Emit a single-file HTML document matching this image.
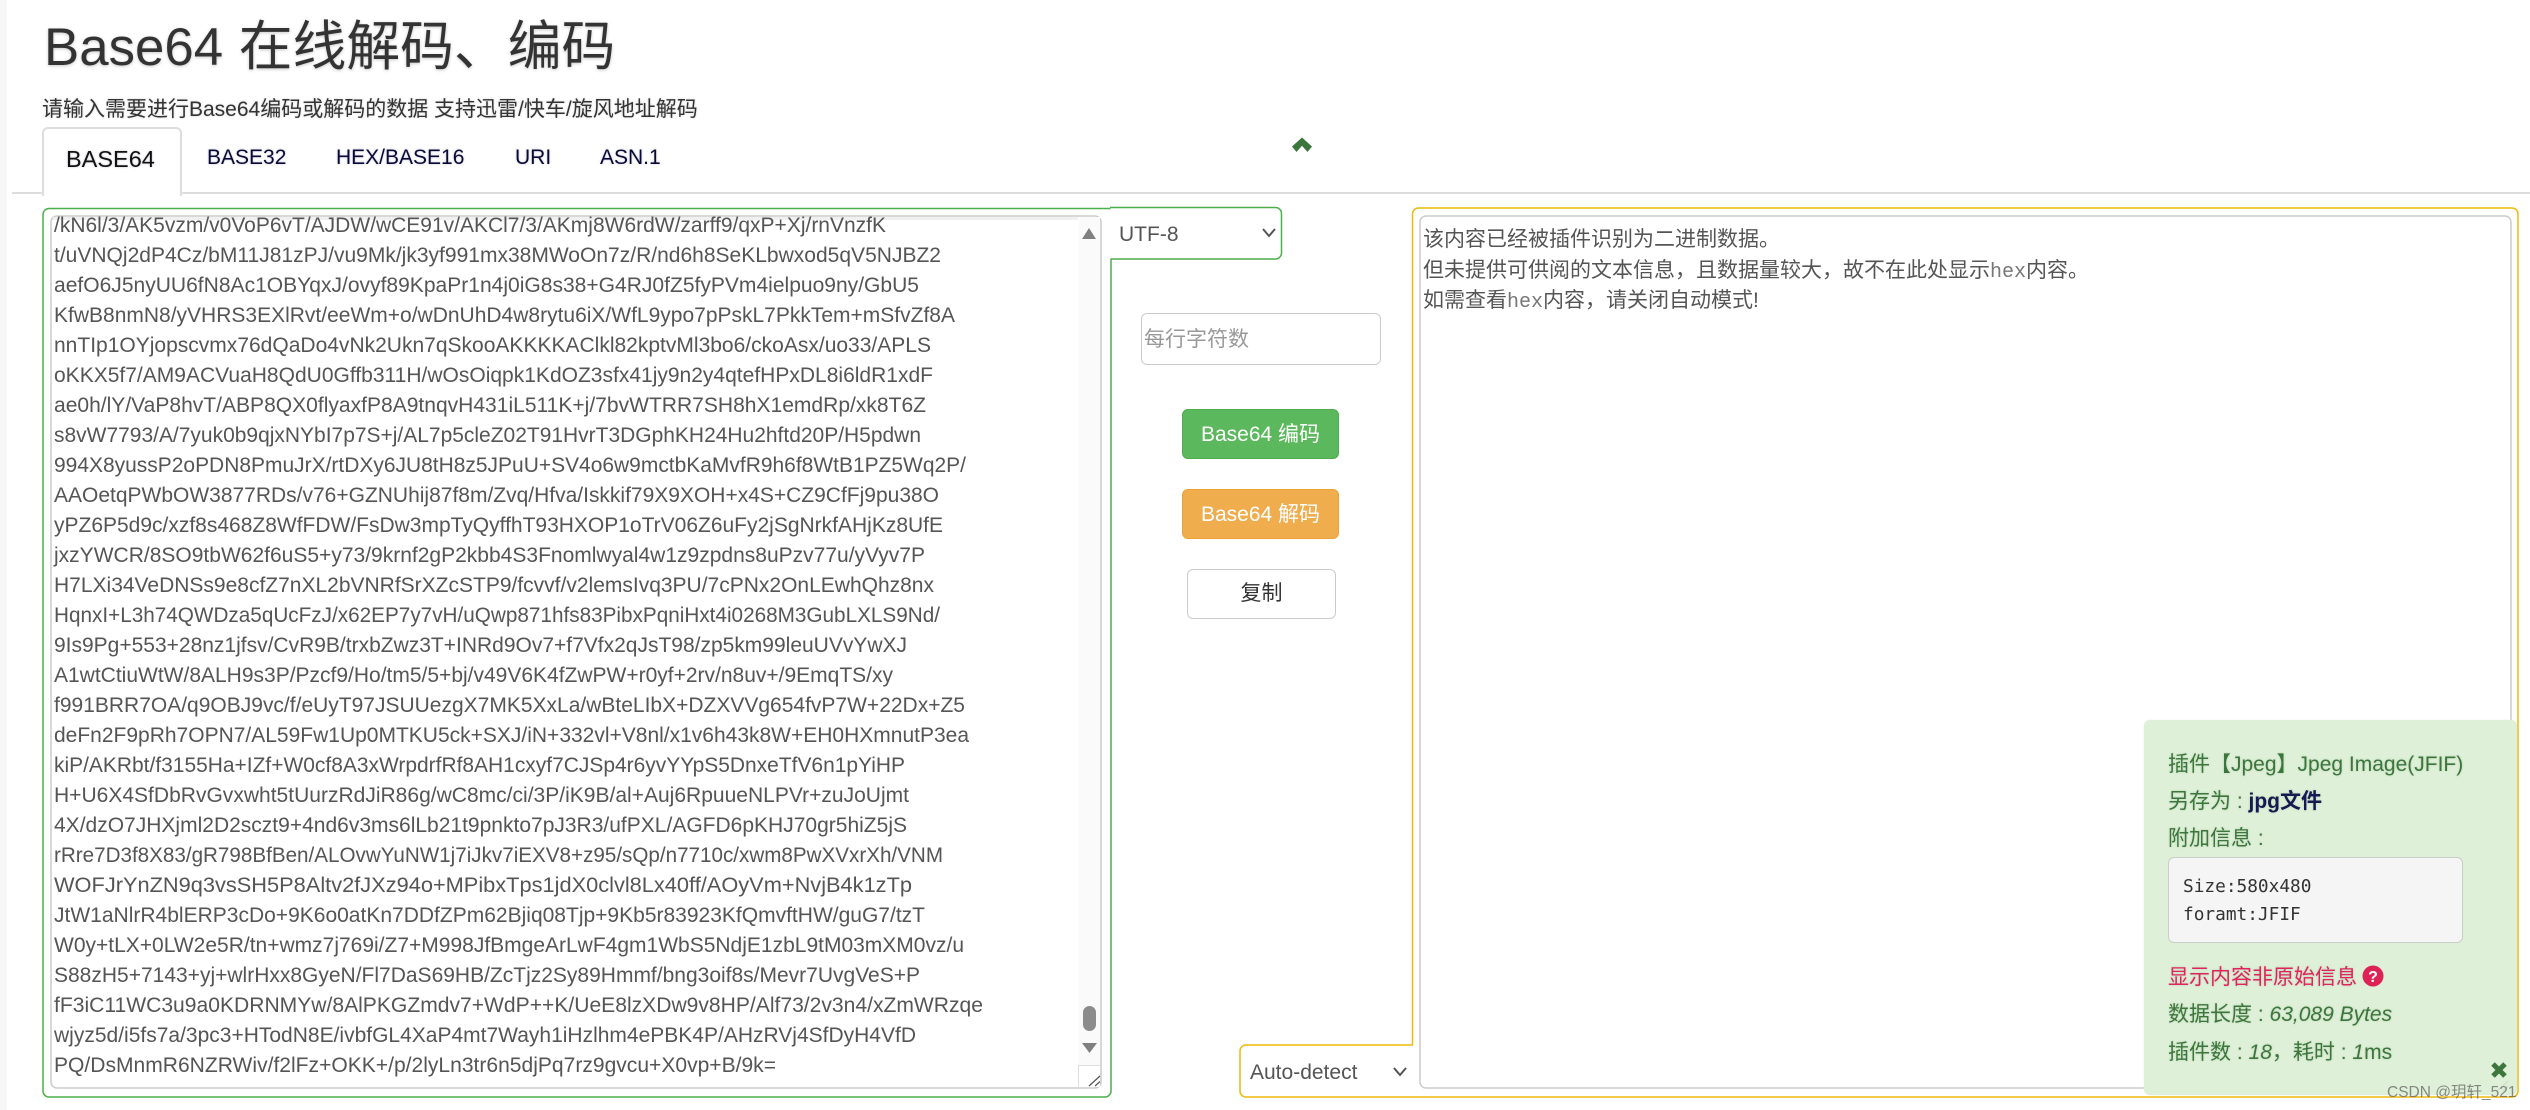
<!DOCTYPE html>
<html lang="zh"><head><meta charset="utf-8"><title>Base64 在线解码、编码</title>
<style>
html,body{margin:0;padding:0;background:#fff}
body{position:relative;width:2530px;height:1110px;overflow:hidden;font-family:"Liberation Sans","Noto Sans CJK SC",sans-serif;color:#333}
.a{position:absolute}
.t{position:absolute;white-space:pre;line-height:30px}
.tab{position:absolute;white-space:pre;line-height:30px;font-size:21px;color:#0a0a38;text-shadow:0 0 2px rgba(0,0,60,.25)}
.btn{position:absolute;border-radius:6px;text-align:center;font-size:21px;box-sizing:border-box}
.p{position:absolute;left:2168px;white-space:pre;line-height:30px;font-size:21px;color:#3c763d;text-shadow:0 0 2px rgba(60,118,61,.25)}
svg{position:absolute;left:0;top:0}
</style></head><body>
<div class="a" style="left:0;top:0;width:7px;height:1110px;background:#f7f7f7"></div>

<div class="t" style="left:44px;top:15px;font-size:52.8px;line-height:64px;color:#333;word-spacing:1px;text-shadow:0 1px 3px rgba(0,0,0,.22)">Base64 <span style="font-size:53.8px">在线解码、编码</span></div>
<div class="t" style="left:42px;top:95px;font-size:21px;color:#333;text-shadow:0 0 2px rgba(0,0,0,.2)">请输入需要进行Base64编码或解码的数据 支持迅雷/快车/旋风地址解码</div>

<div class="a" style="left:12px;top:192px;width:2518px;height:2px;background:#ddd"></div>
<div class="a" style="left:42px;top:127px;width:136px;height:67px;background:#fff;border:2px solid #ddd;border-bottom:0;border-radius:6px 6px 0 0"></div>
<div class="tab" style="left:66px;top:144px;font-size:23.5px;color:#111">BASE64</div>
<div class="tab" style="left:207px;top:143px">BASE32</div>
<div class="tab" style="left:336px;top:143px">HEX/BASE16</div>
<div class="tab" style="left:515px;top:143px">URI</div>
<div class="tab" style="left:600px;top:143px">ASN.1</div>

<svg width="2530" height="1110" viewBox="0 0 2530 1110">
  <polygon points="1302,137.5 1312,146.5 1307.5,152 1302,145.8 1296.5,152 1292,146.5" fill="#3c763d"/>
  <!-- left textarea -->
  <rect x="51" y="216" width="1050" height="872" rx="6" fill="#fff" stroke="#ccc" stroke-width="1.5"/>
  <rect x="53" y="217" width="1025" height="3" fill="#f0f0f0"/>
  <rect x="1079" y="217" width="21" height="848" fill="#fafafa"/>
  <g fill="#555" font-family="'Liberation Sans',sans-serif" font-size="21.5">
<text x="54" y="232" textLength="832" lengthAdjust="spacingAndGlyphs">/kN6l/3/AK5vzm/v0VoP6vT/AJDW/wCE91v/AKCl7/3/AKmj8W6rdW/zarff9/qxP+Xj/rnVnzfK</text>
<text x="54" y="262" textLength="887" lengthAdjust="spacingAndGlyphs">t/uVNQj2dP4Cz/bM11J81zPJ/vu9Mk/jk3yf991mx38MWoOn7z/R/nd6h8SeKLbwxod5qV5NJBZ2</text>
<text x="54" y="292" textLength="865" lengthAdjust="spacingAndGlyphs">aefO6J5nyUU6fN8Ac1OBYqxJ/ovyf89KpaPr1n4j0iG8s38+G4RJ0fZ5fyPVm4ielpuo9ny/GbU5</text>
<text x="54" y="322" textLength="901" lengthAdjust="spacingAndGlyphs">KfwB8nmN8/yVHRS3EXlRvt/eeWm+o/wDnUhD4w8rytu6iX/WfL9ypo7pPskL7PkkTem+mSfvZf8A</text>
<text x="54" y="352" textLength="877" lengthAdjust="spacingAndGlyphs">nnTIp1OYjopscvmx76dQaDo4vNk2Ukn7qSkooAKKKKAClkl82kptvMl3bo6/ckoAsx/uo33/APLS</text>
<text x="54" y="382" textLength="879" lengthAdjust="spacingAndGlyphs">oKKX5f7/AM9ACVuaH8QdU0Gffb311H/wOsOiqpk1KdOZ3sfx41jy9n2y4qtefHPxDL8i6ldR1xdF</text>
<text x="54" y="412" textLength="872" lengthAdjust="spacingAndGlyphs">ae0h/lY/VaP8hvT/ABP8QX0flyaxfP8A9tnqvH431iL511K+j/7bvWTRR7SH8hX1emdRp/xk8T6Z</text>
<text x="54" y="442" textLength="867" lengthAdjust="spacingAndGlyphs">s8vW7793/A/7yuk0b9qjxNYbI7p7S+j/AL7p5cleZ02T91HvrT3DGphKH24Hu2hftd20P/H5pdwn</text>
<text x="54" y="472" textLength="912" lengthAdjust="spacingAndGlyphs">994X8yussP2oPDN8PmuJrX/rtDXy6JU8tH8z5JPuU+SV4o6w9mctbKaMvfR9h6f8WtB1PZ5Wq2P/</text>
<text x="54" y="502" textLength="885" lengthAdjust="spacingAndGlyphs">AAOetqPWbOW3877RDs/v76+GZNUhij87f8m/Zvq/Hfva/Iskkif79X9XOH+x4S+CZ9CfFj9pu38O</text>
<text x="54" y="532" textLength="889" lengthAdjust="spacingAndGlyphs">yPZ6P5d9c/xzf8s468Z8WfFDW/FsDw3mpTyQyffhT93HXOP1oTrV06Z6uFy2jSgNrkfAHjKz8UfE</text>
<text x="54" y="562" textLength="871" lengthAdjust="spacingAndGlyphs">jxzYWCR/8SO9tbW62f6uS5+y73/9krnf2gP2kbb4S3Fnomlwyal4w1z9zpdns8uPzv77u/yVyv7P</text>
<text x="54" y="592" textLength="880" lengthAdjust="spacingAndGlyphs">H7LXi34VeDNSs9e8cfZ7nXL2bVNRfSrXZcSTP9/fcvvf/v2lemsIvq3PU/7cPNx2OnLEwhQhz8nx</text>
<text x="54" y="622" textLength="886" lengthAdjust="spacingAndGlyphs">HqnxI+L3h74QWDza5qUcFzJ/x62EP7y7vH/uQwp871hfs83PibxPqniHxt4i0268M3GubLXLS9Nd/</text>
<text x="54" y="652" textLength="853" lengthAdjust="spacingAndGlyphs">9Is9Pg+553+28nz1jfsv/CvR9B/trxbZwz3T+INRd9Ov7+f7Vfx2qJsT98/zp5km99leuUVvYwXJ</text>
<text x="54" y="682" textLength="839" lengthAdjust="spacingAndGlyphs">A1wtCtiuWtW/8ALH9s3P/Pzcf9/Ho/tm5/5+bj/v49V6K4fZwPW+r0yf+2rv/n8uv+/9EmqTS/xy</text>
<text x="54" y="712" textLength="911" lengthAdjust="spacingAndGlyphs">f991BRR7OA/q9OBJ9vc/f/eUyT97JSUUezgX7MK5XxLa/wBteLIbX+DZXVVg654fvP7W+22Dx+Z5</text>
<text x="54" y="742" textLength="915" lengthAdjust="spacingAndGlyphs">deFn2F9pRh7OPN7/AL59Fw1Up0MTKU5ck+SXJ/iN+332vl+V8nl/x1v6h43k8W+EH0HXmnutP3ea</text>
<text x="54" y="772" textLength="851" lengthAdjust="spacingAndGlyphs">kiP/AKRbt/f3155Ha+IZf+W0cf8A3xWrpdrfRf8AH1cxyf7CJSp4r6yvYYpS5DnxeTfV6n1pYiHP</text>
<text x="54" y="802" textLength="855" lengthAdjust="spacingAndGlyphs">H+U6X4SfDbRvGvxwht5tUurzRdJiR86g/wC8mc/ci/3P/iK9B/al+Auj6RpuueNLPVr+zuJoUjmt</text>
<text x="54" y="832" textLength="853" lengthAdjust="spacingAndGlyphs">4X/dzO7JHXjml2D2sczt9+4nd6v3ms6lLb21t9pnkto7pJ3R3/ufPXL/AGFD6pKHJ70gr5hiZ5jS</text>
<text x="54" y="862" textLength="889" lengthAdjust="spacingAndGlyphs">rRre7D3f8X83/gR798BfBen/ALOvwYuNW1j7iJkv7iEXV8+z95/sQp/n7710c/xwm8PwXVxrXh/VNM</text>
<text x="54" y="892" textLength="858" lengthAdjust="spacingAndGlyphs">WOFJrYnZN9q3vsSH5P8Altv2fJXz94o+MPibxTps1jdX0clvl8Lx40ff/AOyVm+NvjB4k1zTp</text>
<text x="54" y="922" textLength="871" lengthAdjust="spacingAndGlyphs">JtW1aNlrR4blERP3cDo+9K6o0atKn7DDfZPm62Bjiq08Tjp+9Kb5r83923KfQmvftHW/guG7/tzT</text>
<text x="54" y="952" textLength="910" lengthAdjust="spacingAndGlyphs">W0y+tLX+0LW2e5R/tn+wmz7j769i/Z7+M998JfBmgeArLwF4gm1WbS5NdjE1zbL9tM03mXM0vz/u</text>
<text x="54" y="982" textLength="866" lengthAdjust="spacingAndGlyphs">S88zH5+7143+yj+wlrHxx8GyeN/Fl7DaS69HB/ZcTjz2Sy89Hmmf/bng3oif8s/Mevr7UvgVeS+P</text>
<text x="54" y="1012" textLength="929" lengthAdjust="spacingAndGlyphs">fF3iC11WC3u9a0KDRNMYw/8AlPKGZmdv7+WdP++K/UeE8lzXDw9v8HP/Alf73/2v3n4/xZmWRzqe</text>
<text x="54" y="1042" textLength="862" lengthAdjust="spacingAndGlyphs">wjyz5d/i5fs7a/3pc3+HTodN8E/ivbfGL4XaP4mt7Wayh1iHzlhm4ePBK4P/AHzRVj4SfDyH4VfD</text>
<text x="54" y="1072" textLength="722" lengthAdjust="spacingAndGlyphs">PQ/DsMnmR6NZRWiv/f2lFz+OKK+/p/2lyLn3tr6n5djPq7rz9gvcu+X0vp+B/9k=</text>
  </g>
  <polygon points="1089,228 1096,239 1082,239" fill="#808080"/>
  <rect x="1083" y="1006" width="13" height="25" rx="6.5" fill="#8c8c8c"/>
  <polygon points="1082,1043 1097,1043 1089.5,1053" fill="#808080"/>
  <path d="M1078.5 1087 V1065.5 H1100.5" fill="#fff" stroke="#ddd" stroke-width="1"/>
  <rect x="1079" y="1066" width="21" height="21" fill="#fff"/>
  <path d="M1089 1086 L1100 1076 M1095 1086 L1100 1081.5" stroke="#555" stroke-width="1.2" fill="none"/>

  <!-- green outline -->
  <path d="M1110.5 208.5 H49 a6 6 0 0 0 -6 6 V1091 a6 6 0 0 0 6 6 H1105 a6 6 0 0 0 6 -6 V259" fill="none" stroke="#4cae4c" stroke-width="1.5"/>
  <path d="M1110 207.5 H1275.5 a6 6 0 0 1 6 6 V253 a6 6 0 0 1 -6 6 H1110.5" fill="none" stroke="#4cae4c" stroke-width="1.5"/>
  <polyline points="1263,229 1269,236 1275,229" fill="none" stroke="#555" stroke-width="2"/>

  <!-- right textarea + yellow outline -->
  <rect x="1420" y="216" width="1091" height="872" rx="6" fill="#fff" stroke="#ccc" stroke-width="1.5"/>
  <path d="M1412.5 1045.5 V214 a6 6 0 0 1 6 -6 H2512 a6 6 0 0 1 6 6 V1091 a6 6 0 0 1 -6 6 H1246 a6 6 0 0 1 -6 -6 V1051 a6 6 0 0 1 6 -6 H1412.5" fill="none" stroke="#eeb90f" stroke-width="1.5"/>
  <polyline points="1394,1068 1400,1075 1406,1068" fill="none" stroke="#555" stroke-width="2"/>
</svg>

<div class="t" style="left:1119px;top:220px;font-size:21px;color:#555">UTF-8</div>
<div class="t" style="left:1250px;top:1058px;font-size:21px;color:#555">Auto-detect</div>

<div class="a" style="left:1141px;top:313px;width:238px;height:50px;border:1.5px solid #ccc;border-radius:6px;background:#fff"></div>
<div class="t" style="left:1144px;top:325px;font-size:21px;color:#999">每行字符数</div>

<div class="btn" style="left:1182px;top:409px;width:157px;height:50px;line-height:50px;background:#5cb85c;border:1px solid #4cae4c;color:#fff">Base64 编码</div>
<div class="btn" style="left:1182px;top:489px;width:157px;height:50px;line-height:50px;background:#f0ad4e;border:1px solid #eea236;color:#fff">Base64 解码</div>
<div class="btn" style="left:1187px;top:569px;width:149px;height:50px;line-height:48px;background:#fff;border:1.5px solid #ccc;color:#333">复制</div>

<div class="t" style="left:1423px;top:225px;font-size:21px;color:#555">该内容已经被插件识别为二进制数据。</div>
<div class="t" style="left:1423px;top:256px;font-size:21px;color:#555">但未提供可供阅的文本信息，且数据量较大，故不在此处显示<span style="font-family:'Liberation Mono',monospace;font-size:20px;color:#777">hex</span>内容。</div>
<div class="t" style="left:1423px;top:286px;font-size:21px;color:#555">如需查看<span style="font-family:'Liberation Mono',monospace;font-size:20px;color:#777">hex</span>内容，请关闭自动模式!</div>

<!-- green panel -->
<div class="a" style="left:2144px;top:720px;width:373px;height:375px;background:#dff0d8;border-radius:6px;box-shadow:0 0 1px #d6e9c6"></div>
<div class="p" style="top:750px">插件【Jpeg】Jpeg Image(JFIF)</div>
<div class="p" style="top:787px">另存为 : <b style="color:#171a52">jpg文件</b></div>
<div class="p" style="top:824px">附加信息 :</div>
<div class="a" style="left:2168px;top:857px;width:293px;height:84px;background:#f5f5f5;border:1.5px solid #ccc;border-radius:6px"></div>
<div class="t" style="left:2183px;top:873px;font-family:'DejaVu Sans Mono',monospace;font-size:17.8px;line-height:28px;color:#333">Size:580x480
foramt:JFIF</div>
<div class="p" style="top:963px;color:#e0245e">显示内容非原始信息</div>
<svg width="2530" height="1110" viewBox="0 0 2530 1110" style="pointer-events:none">
  <circle cx="2373" cy="976" r="10.5" fill="#dd2255"/>
  <text x="2373" y="982" text-anchor="middle" font-family="'Liberation Sans',sans-serif" font-weight="700" font-size="16" fill="#fff">?</text>
  <path d="M2493 1064 L2505 1076 M2505 1064 L2493 1076" stroke="#3c763d" stroke-width="5"/>
  <path d="M2497 1091 L2508 1081 M2503 1091 L2508 1086" stroke="#cfdcc9" stroke-width="1.2" fill="none"/>
</svg>
<div class="p" style="top:1000px">数据长度 : <i>63,089 Bytes</i></div>
<div class="p" style="top:1038px">插件数 : <i>18</i>，耗时 : <i>1</i>ms</div>
<div class="t" style="left:2387px;top:1078px;font-size:15.5px;color:rgba(90,90,90,.7)">CSDN @玥轩_521</div>
</body></html>
